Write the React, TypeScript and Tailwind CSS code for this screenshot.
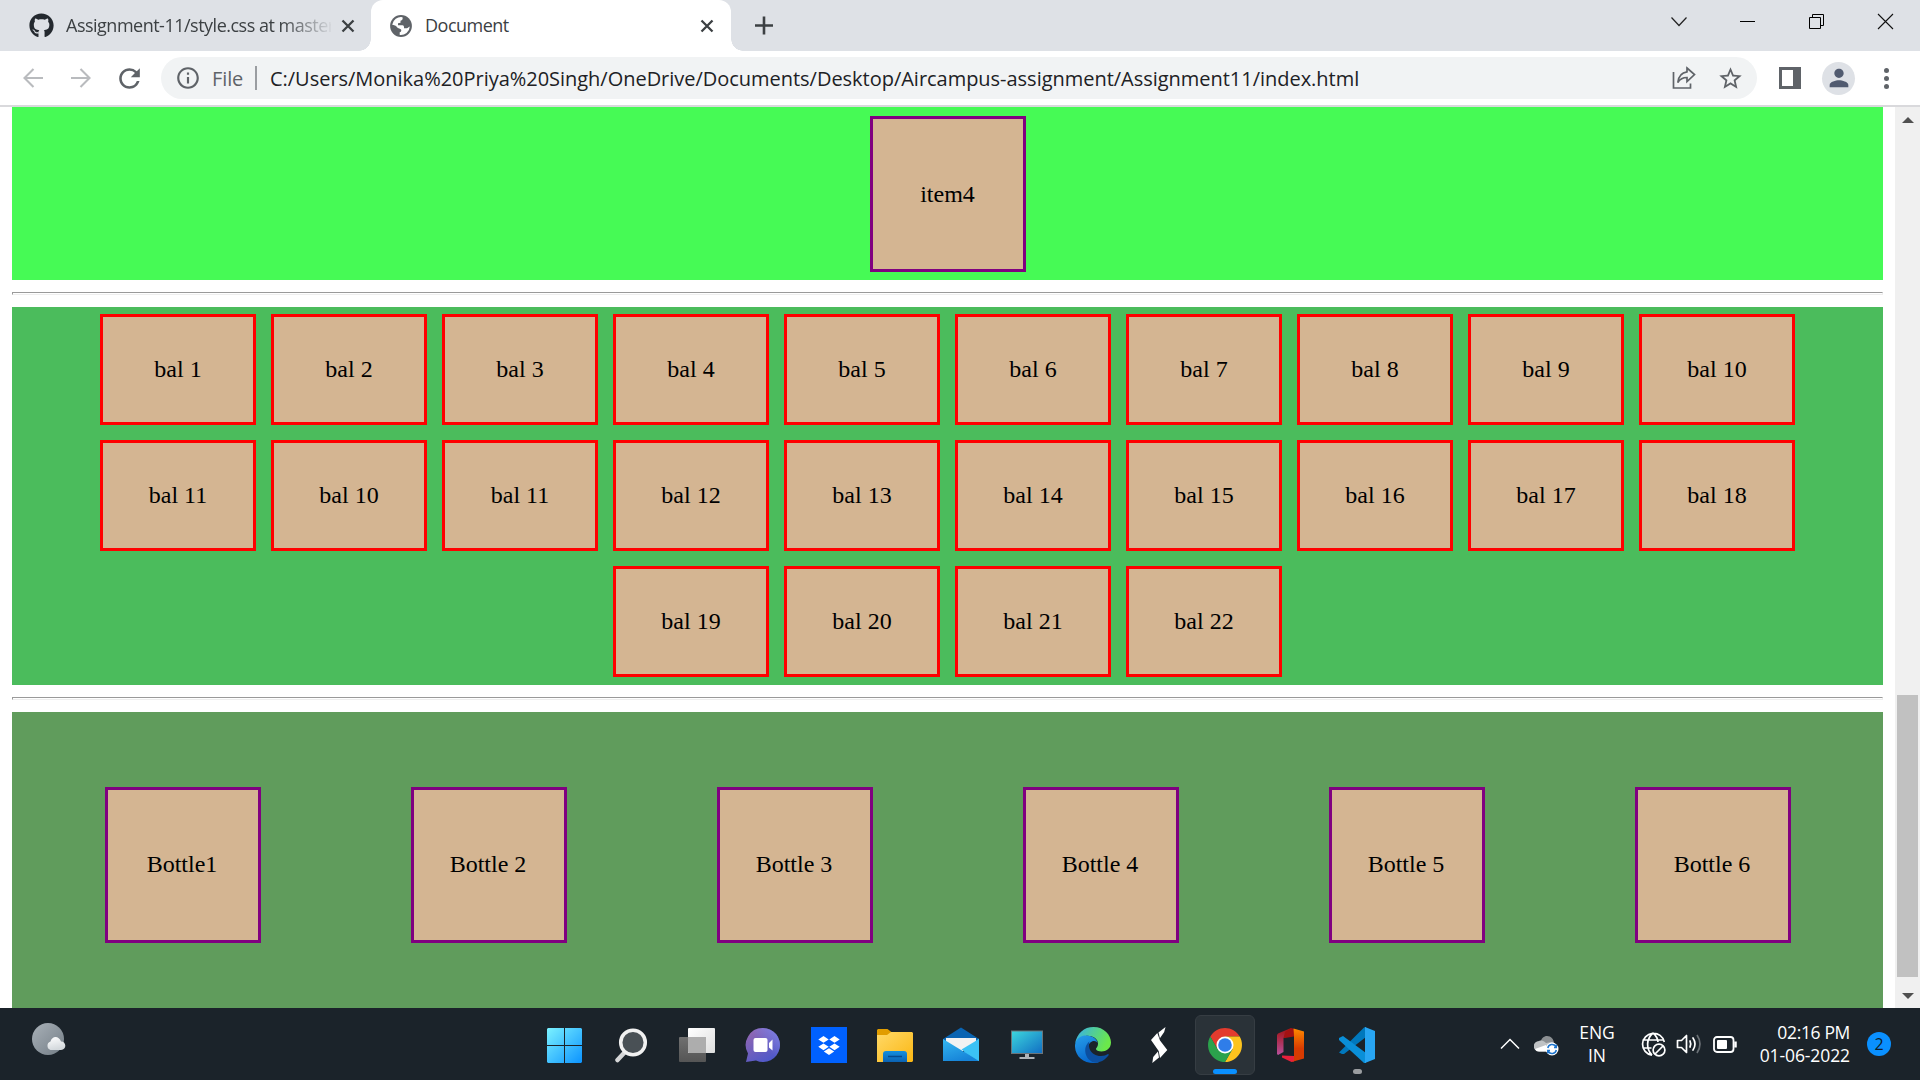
import React from "react";
import { FaGithub } from "react-icons/fa";
import { MdRefresh, MdOutlineInfo, MdStarOutline, MdPerson } from "react-icons/md";

const balls = [1, 2, 3, 4, 5, 6, 7, 8, 9, 10, 11, 10, 11, 12, 13, 14, 15, 16, 17, 18, 19, 20, 21, 22];
const bottles = ["Bottle1", "Bottle 2", "Bottle 3", "Bottle 4", "Bottle 5", "Bottle 6"];

function CloseX() {
  return (
    <svg width="14" height="14" viewBox="0 0 14 14" stroke="#3c4043" strokeWidth="2.3" className="shrink-0">
      <path d="M1.5 1.5 12.5 12.5M12.5 1.5 1.5 12.5" />
    </svg>
  );
}

function TabStrip() {
  return (
    <div className="flex h-[51px] bg-[#dee1e6] text-[18px] leading-[24px] text-[#3c4043]">
      <div className="flex h-[51px] w-[371px] items-center pl-[29px]">
        <FaGithub size={25} color="#24292f" className="shrink-0" />
        <div className="ml-[12px] w-[265px] overflow-hidden pb-[1px] whitespace-nowrap tracking-[-0.5px] [mask-image:linear-gradient(to_right,black_215px,transparent_268px)]">
          Assignment-11/style.css at master
        </div>
        <div className="ml-[10px]">
          <CloseX />
        </div>
      </div>
      <div className="relative flex h-[51px] w-[360px] items-center rounded-t-[12px] bg-white pl-[19px]">
        <span className="absolute bottom-0 -left-[12px] size-[12px] bg-[radial-gradient(circle_at_0_0,transparent_11.5px,white_12px)]" />
        <span className="absolute bottom-0 -right-[12px] size-[12px] bg-[radial-gradient(circle_at_100%_0,transparent_11.5px,white_12px)]" />
        <svg width="22" height="22" viewBox="0 0 22 22" className="shrink-0">
          <circle cx="11" cy="11" r="10.900" fill="#5f6368" />
          <path fill="#fff" d="M2.200 9.800A9 9 0 0 1 12.500 2.200C13 4 12.500 5.200 10.500 5.800V7.800L8 8.200V10.200H12.500C13.800 10.400 14.200 11.500 14 13.200H16.500C17.800 13.500 18.200 12.200 19.800 11.500A9 9 0 0 1 9.700 19.900V17.200C11 17.200 11.400 16.400 11.200 14.800 10.500 13.200 8 13.600 7 12.200 6 10.500 4 10.200 2.200 9.800Z" />
        </svg>
        <div className="ml-[13px] w-[275px] pb-[1px] tracking-[-0.5px]">Document</div>
        <CloseX />
      </div>
      <svg width="20" height="20" viewBox="0 0 20 20" stroke="#3c4043" strokeWidth="2.600" className="mt-[15px] ml-[23px]">
        <path d="M1 10.500H19M10 1.500V19.500" />
      </svg>
      <div className="mt-[13px] mr-[26px] ml-auto flex gap-[52px]">
        <svg width="17" height="17" viewBox="0 0 17 17" fill="none" stroke="#222" strokeWidth="1.200">
          <path d="M1.500 4.500 9 12.500 16.500 4.500" />
        </svg>
        <svg width="17" height="17" viewBox="0 0 17 17" stroke="#000" strokeWidth="1">
          <path d="M1 8.500H16" />
        </svg>
        <svg width="17" height="17" viewBox="0 0 17 17" fill="none" stroke="#000" strokeWidth="1">
          <path d="M1.500 4.500H12.500V15.500H1.500ZM4.500 4.500V1.500H15.500V12.500H12.500" />
        </svg>
        <svg width="17" height="17" viewBox="0 0 17 17" stroke="#111" strokeWidth="1.100">
          <path d="M1 1 16 16M16 1 1 16" />
        </svg>
      </div>
    </div>
  );
}

function Toolbar() {
  return (
    <div className="flex h-[56px] items-center border-b-2 border-[#d9d9dc] bg-white">
      <svg width="22" height="22" viewBox="0 0 22 22" fill="none" stroke="#b9bbbe" strokeWidth="2.100" className="ml-[22px]">
        <path d="M21 11H3M11.500 2 2.500 11 11.500 20" />
      </svg>
      <svg width="22" height="22" viewBox="0 0 22 22" fill="none" stroke="#b9bbbe" strokeWidth="2.100" className="ml-[26px]">
        <path d="M1 11H19M10.500 2 19.500 11 10.500 20" />
      </svg>
      <MdRefresh size={31} color="#5f6368" className="ml-[22px] shrink-0" />
      <div className="ml-[16px] flex h-[42px] w-[1596px] items-center rounded-full bg-[#f1f3f4] pl-[14px]">
        <MdOutlineInfo size={26} color="#5f6368" className="shrink-0" />
        <div className="ml-[11px] w-[43px] pt-[1px] text-[20px] tracking-[-0.1px] text-[#5f6368]">File</div>
        <div className="h-[24px] w-[2px] bg-[#9a9da1]" />
        <div className="ml-[13px] pt-[1px] text-[20px] tracking-[-0.025px] whitespace-nowrap text-[#202124]">
          C:/Users/Monika%20Priya%20Singh/OneDrive/Documents/Desktop/Aircampus-assignment/Assignment11/index.html
        </div>
        <svg width="24" height="24" viewBox="0 0 24 24" fill="none" stroke="#5f6368" strokeWidth="1.700" className="mr-[21px] ml-auto shrink-0">
          <path d="M1.500 6V22H18.500V17.500" />
          <path d="M15 2 22.500 8.500 15 15.500V11.500C10.500 11.500 8 13 5.800 16.500 6.500 10.500 9.500 6.500 15 5.800Z" />
        </svg>
        <MdStarOutline size={27} color="#5f6368" className="mr-[13px] shrink-0" />
      </div>
      <div className="ml-[22px] flex h-[22px] w-[22px] justify-start bg-[#5f6368] p-[3px]">
        <div className="h-full w-[11px] bg-white" />
      </div>
      <div className="ml-[21px] flex size-[33px] items-center justify-center rounded-full bg-[#dee1e6]">
        <MdPerson size={28} color="#515b70" />
      </div>
      <div className="ml-[29px] flex flex-col gap-[3px]">
        <span className="size-[5px] rounded-full bg-[#5f6368]" />
        <span className="size-[5px] rounded-full bg-[#5f6368]" />
        <span className="size-[5px] rounded-full bg-[#5f6368]" />
      </div>
    </div>
  );
}

function Rule() {
  return (
    <div className="my-[12px] h-[3px] border border-t-[#9a9a9a] border-r-[#eeeeee] border-b-[#eeeeee] border-l-[#9a9a9a]" />
  );
}

function Page() {
  return (
    <div className="flex h-[901px] overflow-hidden bg-white">
      <div className="ml-[12px] w-[1871px] font-['Liberation_Serif',serif] text-[24px] leading-[27px] text-black">
        <div className="flex h-[173px] justify-center bg-[#46fa55] pt-[9px]">
          <div className="flex size-[156px] items-center justify-center border-3 border-[#800080] bg-[#d4b592]">item4</div>
        </div>
        <Rule />
        <div className="flex h-[378px] flex-wrap content-start justify-center gap-[15px] bg-[#4bbc5c] px-[80px] pt-[7px]">
          {balls.map((n, i) => (
            <div key={i} className="flex h-[111px] w-[156px] items-center justify-center border-3 border-[#ff0000] bg-[#d4b592]">
              bal {n}
            </div>
          ))}
        </div>
        <Rule />
        <div className="flex h-[296px] gap-[150px] bg-[#609c5c] pt-[75px] pl-[93px]">
          {bottles.map((b) => (
            <div
              key={b}
              className="flex size-[156px] shrink-0 items-center justify-center border-3 border-[#800080] bg-[#d4b592] pr-[2px] pb-[2px]"
            >
              {b}
            </div>
          ))}
        </div>
      </div>
      <div className="ml-[12px] flex w-[25px] flex-col items-center bg-[#f0f0f0]">
        <svg width="12" height="6" viewBox="0 0 12 6" fill="#505050" className="mt-[10px]">
          <path d="M0 6 6 0 12 6Z" />
        </svg>
        <div className="mt-[572px] h-[282px] w-[21px] bg-[#c1c1c1]" />
        <svg width="12" height="6" viewBox="0 0 12 6" fill="#505050" className="mt-[16px]">
          <path d="M0 0H12L6 6Z" />
        </svg>
      </div>
    </div>
  );
}

function AppIcon({ children }: { children: React.ReactNode }) {
  return (
    <svg width="36" height="36" viewBox="0 0 36 36" className="shrink-0">
      {children}
    </svg>
  );
}

function Cell({ children, active }: { children: React.ReactNode; active?: boolean }) {
  return (
    <div
      className={
        active
          ? "relative mx-[3px] flex size-[60px] items-center justify-center rounded-[6px] border border-[#363d43] bg-[#2a3238]"
          : "relative mx-[3px] flex size-[60px] items-center justify-center"
      }
    >
      {children}
    </div>
  );
}

function Gradient({ id, from, to, x2 = "1", y2 = "1" }: { id: string; from: string; to: string; x2?: string; y2?: string }) {
  return (
    <linearGradient id={id} x1="0" y1="0" x2={x2} y2={y2}>
      <stop offset="0" stopColor={from} />
      <stop offset="1" stopColor={to} />
    </linearGradient>
  );
}

function Apps() {
  return (
    <div className="flex pt-[7px]">
      <Cell>
        <AppIcon>
          <defs>
            <linearGradient id="win" gradientUnits="userSpaceOnUse" x1="0" y1="0" x2="36" y2="36">
              <stop offset="0" stopColor="#7df3ff" />
              <stop offset="1" stopColor="#0a92ff" />
            </linearGradient>
          </defs>
          <path fill="url(#win)" d="M1 1H17V18H0V2ZM18 1H34L35 2V18H18ZM0 19H17V36H1L0 35ZM18 19H35V35L34 36H18Z" />
        </AppIcon>
      </Cell>
      <Cell>
        <AppIcon>
          <path d="M11.500 25.500 4.500 33" stroke="#d5d6d7" strokeWidth="4.500" strokeLinecap="round" />
          <circle cx="20" cy="15.500" r="12.300" fill="#495055" stroke="#f1f1f1" strokeWidth="3.500" />
        </AppIcon>
      </Cell>
      <Cell>
        <AppIcon>
          <defs>
            <Gradient id="tvBack" from="#707070" to="#555" x2="0" />
            <Gradient id="tvFront" from="#ffffff" to="#dedede" />
          </defs>
          <rect x="0" y="10" width="27" height="25" rx="1" fill="url(#tvBack)" />
          <rect x="9" y="1" width="27" height="25" rx="1" fill="url(#tvFront)" />
          <path d="M9 10H27V26H10L9 25Z" fill="#adadad" />
        </AppIcon>
      </Cell>
      <Cell>
        <AppIcon>
          <defs>
            <Gradient id="chat" from="#9a68ae" to="#5059c9" x2="0.6" />
            <linearGradient id="chatEdge" x1="0" y1="1" x2="1" y2="0">
              <stop offset="0.500" stopColor="#7b83eb" stopOpacity="0" />
              <stop offset="1" stopColor="#7b83eb" />
            </linearGradient>
          </defs>
          <path fill="url(#chat)" d="M18 1a17 17 0 1 1-7 32.500L1 35 3 26.500A17 17 0 0 1 18 1Z" />
          <path fill="url(#chatEdge)" d="M18 1a17 17 0 1 1-7 32.500L1 35 3 26.500A17 17 0 0 1 18 1Z" />
          <rect x="8.500" y="11" width="14" height="14" rx="2" fill="#fff" />
          <path d="M24 16 27.500 12.500V23.500L24 20.500Z" fill="#fff" />
        </AppIcon>
      </Cell>
      <Cell>
        <AppIcon>
          <path fill="#0061ff" d="M0 0H36V36H0Z" />
          <path
            fill="#fff"
            d="M12.500 9 17.700 12.400 12.500 15.800 7.300 12.400ZM23.500 9 28.700 12.400 23.500 15.800 18.300 12.400ZM12.500 16.400 17.700 19.800 12.500 23.200 7.300 19.800ZM23.500 16.400 28.700 19.800 23.500 23.200 18.300 19.800ZM18 21.200 23.200 24.600 18 28 12.800 24.600Z"
          />
        </AppIcon>
      </Cell>
      <Cell>
        <AppIcon>
          <defs>
            <Gradient id="folder" from="#ffd968" to="#fbb713" />
            <Gradient id="pocket" from="#1490df" to="#0b62b3" x2="0" />
          </defs>
          <path fill="#e19d00" d="M0 3 1 2H10.500L15 5.500 12 9H0Z" />
          <path fill="url(#folder)" d="M0 8H10L14 5H35L36 6V34L35 35H0Z" />
          <path fill="url(#pocket)" d="M6 35V27Q6 24 9 24H27Q30 24 30 27V35Z" />
          <path stroke="#064a8c" strokeWidth="1.500" d="M11 29.500H25" />
        </AppIcon>
      </Cell>
      <Cell>
        <AppIcon>
          <defs>
            <Gradient id="mailL" from="#35b8f1" to="#1683d8" x2="0.5" />
            <Gradient id="mailR" from="#4bd5ff" to="#29a9ea" />
          </defs>
          <path fill="#0a64b2" d="M0 12 18 0.500 36 12V16H0Z" />
          <path fill="#f2f2f2" d="M3 11H33V17L18 25 3 17Z" />
          <path fill="url(#mailR)" d="M36 11.500V34H10Z" />
          <path fill="url(#mailL)" d="M0 12 36 34H0Z" />
          <path fill="#3bc2f5" d="M36 12 18.500 22.500 36 34Z" />
        </AppIcon>
      </Cell>
      <Cell>
        <AppIcon>
          <defs>
            <Gradient id="monitor" from="#3cd5dd" to="#116fc3" />
          </defs>
          <path fill="#aeb3b7" d="M16 26H20V30H25.500V32H10.500V30H16Z" />
          <rect x="2" y="3.500" width="32" height="23.500" fill="#6c7479" />
          <rect x="3" y="4.500" width="30" height="21.500" fill="url(#monitor)" />
        </AppIcon>
      </Cell>
      <Cell>
        <AppIcon>
          <defs>
            <Gradient id="edgeTop" from="#35aef0" to="#6be84a" y2="0.35" />
            <Gradient id="edgeLeft" from="#279eea" to="#0869ce" x2="0.4" />
          </defs>
          <path fill="url(#edgeTop)" d="M0 17C2 6 9 0 18.500 0 29 0 36 8 36 15.500c0 6-5 9-9.500 9-3 0-5.500-1-5.500-2.500 0-1 2-2 2-5.500C23 11 16 8 10.500 9 5 10 1 14 0 17Z" />
          <path fill="url(#edgeLeft)" d="M0 18C1 11 6 8.500 11 8.500c7 0 11.500 4 11.500 8 0-2-3-3-5.500-2-6 2-6 16 7 21C10 38-0.500 30 0 18Z" />
          <path fill="#0c4fa0" d="M14.500 14.500C12.500 19 15 29 26 29c3 0 5-1 7-2 1 0 1 1 0 2-3 4-8 7-14 6.500C10 33 7 20 14.500 14.500Z" />
        </AppIcon>
      </Cell>
      <Cell>
        <AppIcon>
          <path fill="#fff" d="M10 13 16.300 6 19 13.500 26.300 23 19 31 17.700 24Z" />
          <path fill="#fff" d="M24.500 0 23.200 5 18.900 11.200 17.500 5.400Z" />
          <path fill="#fff" d="M11.300 36 12.200 30 16.900 24.500 18 30.500Z" />
        </AppIcon>
      </Cell>
      <Cell active>
        <AppIcon>
          <path fill="#e33b2e" d="M3.300 9.500A17 17 0 0 1 32.700 9.500H18L10.600 22.200Z" />
          <path fill="#fcc31e" d="M32.700 9.500A17 17 0 0 1 18 35L25.400 22.200 18 9.500Z" />
          <path fill="#2ba24c" d="M18 35A17 17 0 0 1 3.300 9.500L10.600 22.200H25.400Z" />
          <circle cx="18" cy="18" r="8.500" fill="#fff" />
          <circle cx="18" cy="18" r="6.800" fill="#2f7de9" />
        </AppIcon>
        <span className="absolute bottom-0 h-[5px] w-[24px] rounded-full bg-[#0a90ff]" />
      </Cell>
      <Cell>
        <AppIcon>
          <defs>
            <Gradient id="offR" from="#ff8a00" to="#d83b01" x2="0" y2="0.6" />
            <Gradient id="offL" from="#a31212" to="#b8509c" x2="0" />
          </defs>
          <path fill="url(#offL)" d="M18 1 5 6.500 4 8V27L5 28 10.500 25V11L18 8.500Z" />
          <path fill="#a31212" d="M18.500 1 21 2V9.500L12 11 10.500 11 12 5Z" />
          <path fill="#e8203c" d="M9 28.500 21 29V34.500L18.500 35 9 30.500Z" />
          <path fill="url(#offR)" d="M20.500 1.500 31 4.500V31.500L18.500 35 21 33.500V8.500Z" />
        </AppIcon>
      </Cell>
      <Cell>
        <AppIcon>
          <path fill="#0078bd" d="M0 25.500 25 0.500 27 0V10L5 27H3L0 25.500Z" />
          <path fill="#0a8fd8" d="M0 11 4 9 27 26V36H25L0 13Z" />
          <path fill="#28a5f2" d="M26 0 36 4V32L26 36Z" />
        </AppIcon>
        <span className="absolute bottom-[1px] h-[5px] w-[9px] rounded-full bg-[#9a9da0]" />
      </Cell>
    </div>
  );
}

function Tray() {
  return (
    <div className="mr-[29px] ml-auto flex h-[72px] items-center text-[17px] leading-[23px] text-white">
      <svg width="20" height="12" viewBox="0 0 20 12" fill="none" stroke="#fff" strokeWidth="1.500">
        <path d="M1 10.500 10 1.500 19 10.500" />
      </svg>
      <svg width="26" height="20" viewBox="0 0 26 20" className="mt-[3px] ml-[14px]">
        <path fill="#8b8f92" d="M6 8C7 2 10 0 13 0c4 0 7 3 7 8Z" />
        <path fill="#bfc2c4" d="M5 15.500a5 5 0 0 1 0-10.500c3-1 5 0 7 2l6-1c4 1 4 6 4 9.500Z" />
        <path fill="#fff" d="M1 13 12 9 14 15.500H5Q2 15.500 1 13Z" />
        <circle cx="18" cy="13" r="6.500" fill="#fff" />
        <path fill="none" stroke="#1d74cc" strokeWidth="1.500" d="M13.800 12a4.400 4.400 0 0 1 8-1.500M22.300 14a4.400 4.400 0 0 1-8 1.500M22.300 8.500V11.500H20M13.800 17.500V14.500H16" />
      </svg>
      <div className="ml-[12px] w-[50px] text-center text-[17.500px]">
        <div>ENG</div>
        <div>IN</div>
      </div>
      <svg width="25" height="25" viewBox="0 0 25 25" fill="none" stroke="#fff" strokeWidth="1.700" className="ml-[19px]">
        <path d="M23.300 10A11 11 0 1 0 11 23.200M1.500 8H22.700M1.500 16H10.500M12 1C5 7 5 17 11 23M12 1C15 3.500 16.700 7 17 10" />
        <circle cx="18" cy="18" r="5.900" />
        <path d="M14 22 22 14" />
      </svg>
      <svg width="26" height="22" viewBox="0 0 26 22" fill="none" stroke="#fff" strokeWidth="1.700" className="ml-[10px]">
        <path strokeLinejoin="round" d="M1.500 7.500H5.500L10.500 2.500V19.500L5.500 14.500H1.500Z" />
        <path strokeLinecap="round" d="M14 8Q15.500 11 14 14M17 5Q21 11 17 17" />
        <path stroke="#6a7075" d="M21 2Q27 11 21 20" />
      </svg>
      <svg width="25" height="17" viewBox="0 0 25 17" fill="none" stroke="#fff" strokeWidth="1.800" className="ml-[11px]">
        <rect x="1" y="1" width="19.500" height="15" rx="3" />
        <rect x="4" y="4" width="10" height="9" rx="1" fill="#fff" stroke="none" />
        <path strokeWidth="2.500" d="M22.500 5.500V11.500" />
      </svg>
      <div className="ml-[12px] w-[100px] text-right text-[17.500px] tracking-[-0.1px] whitespace-nowrap">
        <div className="tracking-[-0.35px]">02:16 PM</div>
        <div>01-06-2022</div>
      </div>
      <div className="ml-[17px] flex size-[24px] items-center justify-center rounded-full bg-[#0a90ff] text-[16px] text-[#0f1c28]">2</div>
    </div>
  );
}

function Taskbar() {
  return (
    <div className="flex h-[72px] bg-[#1b232a]">
      <div className="w-[532px] pt-[14px] pl-[32px]">
        <svg width="34" height="34" viewBox="0 0 34 34">
          <defs>
            <Gradient id="moon" from="#a9b1b8" to="#737d86" />
            <Gradient id="cloud" from="#ffffff" to="#d4d9dd" x2="0.3" />
          </defs>
          <circle cx="16" cy="17" r="16" fill="url(#moon)" />
          <path fill="url(#cloud)" d="M18.500 28a4.500 4.500 0 0 1 0-8.500C20 13.500 27 13.500 29 19.500c5.500 0 6 8 0 8.500Z" />
        </svg>
      </div>
      <Apps />
      <Tray />
    </div>
  );
}

export default function App() {
  return (
    <div className="h-[1080px] w-[1920px] overflow-hidden bg-white font-['Open_Sans','Noto_Sans',sans-serif]">
      <TabStrip />
      <Toolbar />
      <Page />
      <Taskbar />
    </div>
  );
}
